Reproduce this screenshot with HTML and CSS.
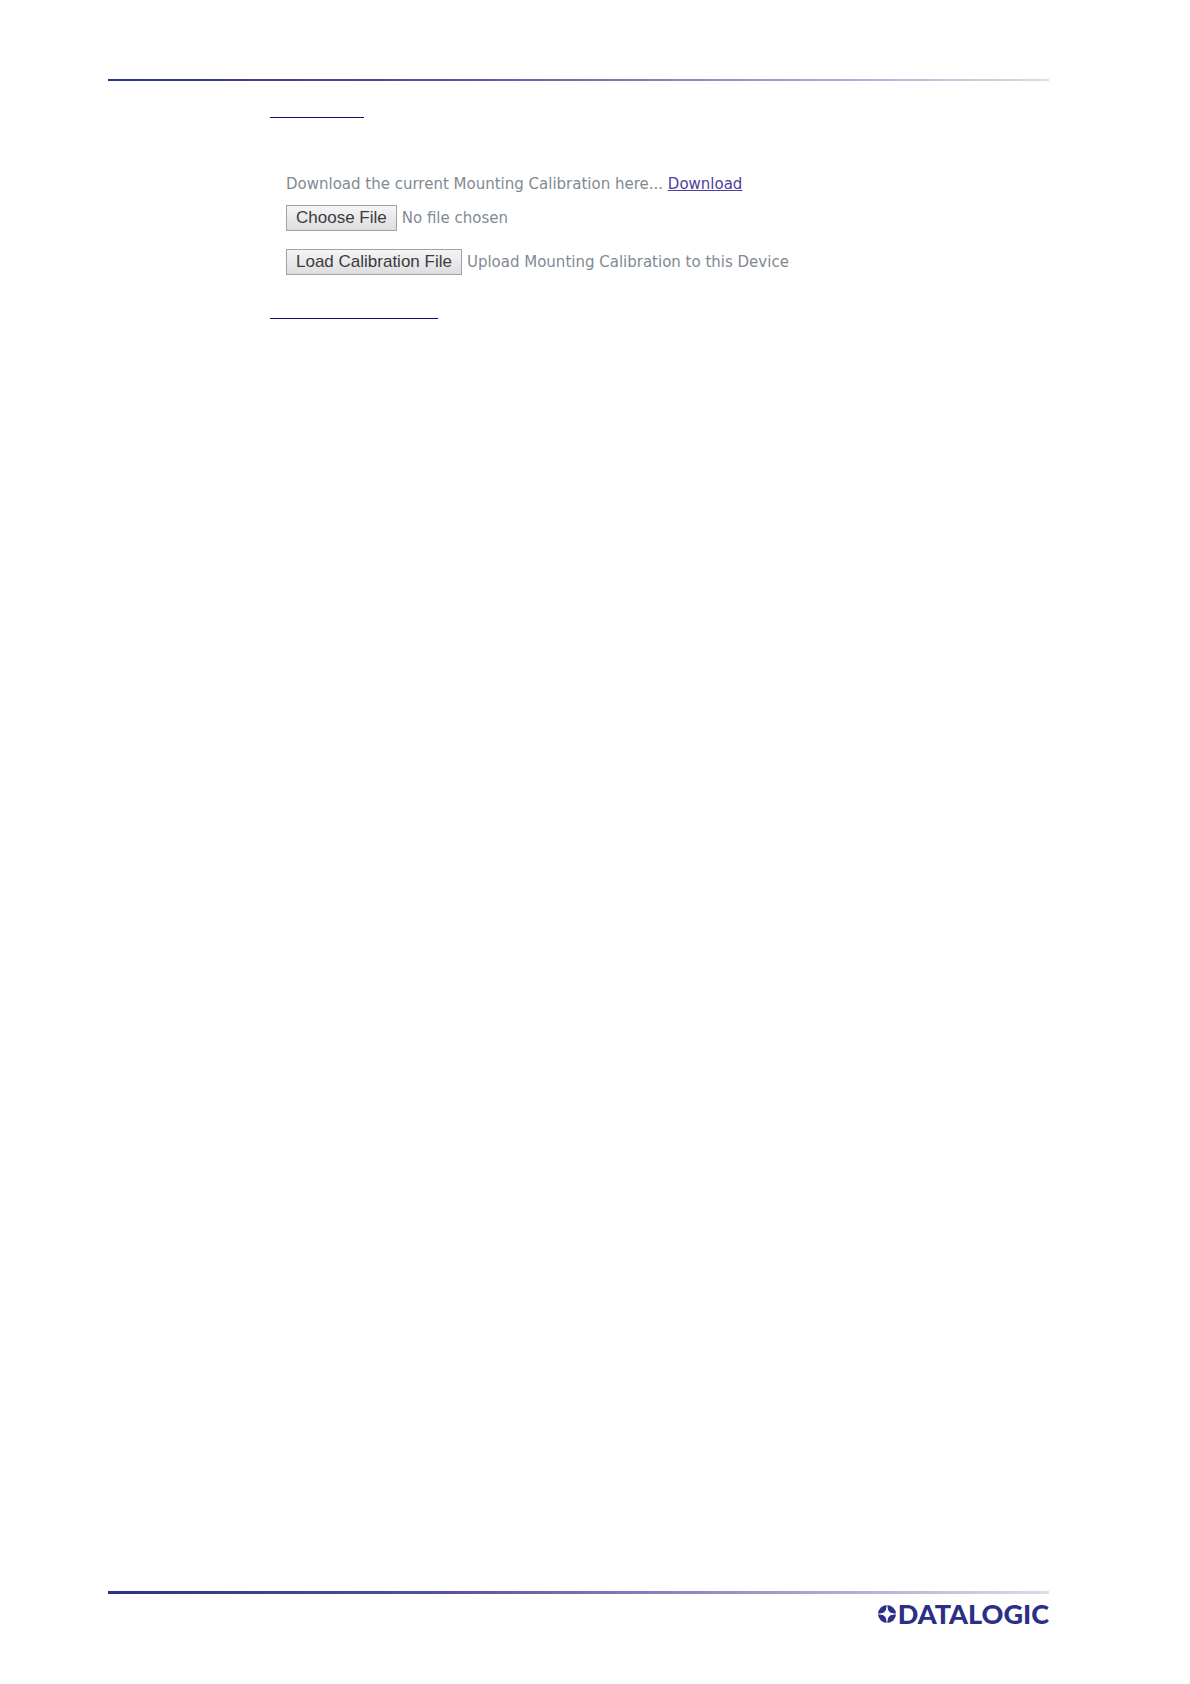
FILE: index.html
```html
<!DOCTYPE html>
<html lang="en">
<head>
<meta charset="utf-8">
<meta name="viewport" content="width=device-width, initial-scale=1">
<title>Mounting Calibration</title>
<link rel="stylesheet" href="styles.css">
</head>
<body>
<div class="page">
  <header class="rule rule-top"></header>
  <main class="content">
    <hr class="mark mark-short">
    <form class="panel">
      <p class="line">Download the current Mounting Calibration here... <a class="link" href="#download">Download</a></p>
      <input class="file" type="file" aria-label="Calibration file">
      <div class="upload">
        <button class="button" id="load" type="button">Load Calibration File</button>
        <label for="load">Upload Mounting Calibration to this Device</label>
      </div>
    </form>
    <hr class="mark mark-long">
  </main>
  <footer class="footer">
    <div class="rule rule-bottom"></div>
    <div class="brand">
      <svg class="brand-icon" viewBox="0 0 20 20" aria-hidden="true">
        <circle cx="10" cy="10" r="10" fill="#2b3087"/>
        <path d="M10 3 Q11 9 17 10 Q11 11 10 17 Q9 11 3 10 Q9 9 10 3Z" fill="#fff" stroke="#fff" stroke-width="1"/>
        <path d="M10 0V4M10 16V20M0 10H4M16 10H20" stroke="#fff" stroke-width="1"/>
      </svg>
      <span class="brand-name">DATALOGIC</span>
    </div>
  </footer>
</div>
</body>
</html>
```
FILE: styles.css
```css
* {
  box-sizing: border-box;
}

body {
  margin: 0;
  background: #fff;
  color: #7f8a93;
  font-family: "DejaVu Sans", Verdana, sans-serif;
  font-size: 15px;
  line-height: 20px;
}

.page {
  display: flex;
  flex-direction: column;
  min-height: 100vh;
  padding: 79px 141px 60px 108px;
}

.rule {
  background: linear-gradient(to right, #24348a, #5350a0 35%, #aaa4d2 75%, #dcdbe6);
}

.rule-top {
  height: 2px;
}

.rule-bottom {
  height: 3px;
}

.content {
  flex: 1;
  padding: 36px 0 0 162px;
}

.mark {
  height: 1px;
  margin: 0;
  border: 0;
  background: #1c0768;
}

.mark-short {
  width: 94px;
}

.mark-long {
  width: 168px;
}

.panel {
  display: flex;
  flex-direction: column;
  align-items: flex-start;
  padding: 56px 16px 43px;
}

.line {
  margin: 0 0 11px;
}

.link {
  color: #50409a;
}

.file {
  height: 26px;
  margin-bottom: 18px;
  width: 100%;
  color: inherit;
  font: inherit;
  line-height: 26px;
}

.button,
.file::file-selector-button {
  height: 26px;
  margin: 0;
  padding: 0 9px;
  border: 1px solid #a2a2a4;
  border-radius: 0;
  background: linear-gradient(#f5f5f6, #dedee0);
  color: #3b3b3f;
  font-family: "Liberation Sans", Arial, sans-serif;
  font-size: 17px;
  line-height: 22px;
}

.file::file-selector-button {
  margin-right: 5px;
}

.upload {
  display: flex;
  align-items: center;
  gap: 5px;
}

.brand {
  display: flex;
  align-items: center;
  justify-content: flex-end;
  gap: 2px;
  height: 20px;
  margin-top: 10px;
}

.brand-icon {
  width: 18px;
  height: 18px;
}

.brand-name {
  color: #2b3087;
  font-family: Lato, "Liberation Sans", sans-serif;
  font-size: 27px;
  font-weight: 900;
  line-height: 18px;
}
```
